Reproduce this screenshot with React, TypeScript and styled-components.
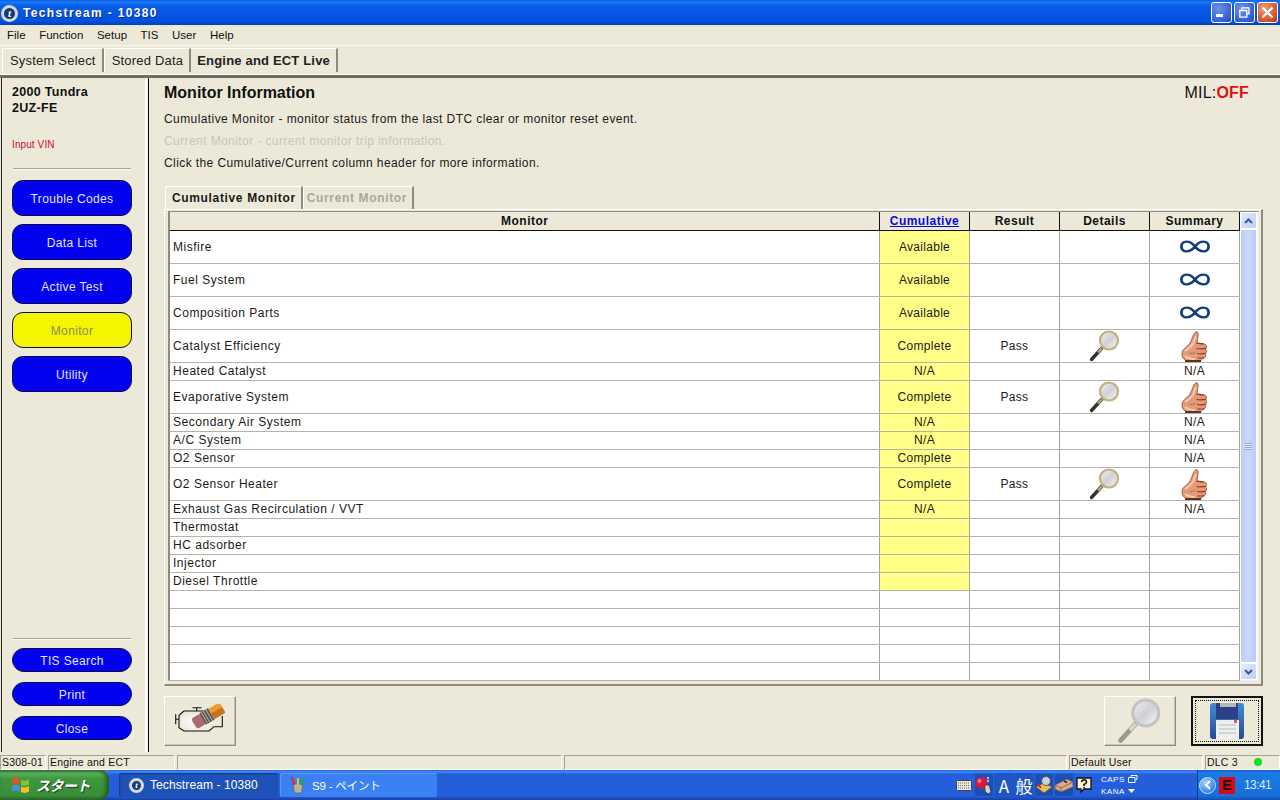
import React from "react";
import styled, { createGlobalStyle } from "styled-components";

const Global = createGlobalStyle`
  html, body { margin: 0; padding: 0; background: #ece9d8; }
  * { box-sizing: border-box; }
`;

const UI = `"Liberation Sans", Arial, "Noto Sans CJK JP", sans-serif`;

const Win = styled.div`
  width: 1280px; height: 800px; overflow: hidden; display: flex; flex-direction: column;
  background: #ece9d8; font-family: ${UI}; font-size: 12px; color: #111;
`;
const TitleBar = styled.div`
  height: 25px; flex: none; display: flex; align-items: center; padding: 1px 2px 0 1px; color: #fff;
  background: linear-gradient(180deg, #0a5ae6 0%, #1a7cf5 8%, #0a5fe8 22%, #0456e0 60%, #0350dc 85%, #0240c4 100%);
`;
const AppGlyph = styled.span<{ $size: number }>`
  width: ${p => p.$size}px; height: ${p => p.$size}px; flex: none; border-radius: 50%;
  display: inline-flex; align-items: center; justify-content: center;
  background: #123a78; border: 3px solid #d5d8dc; color: #fff;
  font: italic bold ${p => p.$size - 6}px "Liberation Serif", serif; line-height: 1;
`;
const TitleText = styled.span`
  margin-left: 5px; font-weight: 700; font-size: 12px; letter-spacing: 1.35px; text-shadow: 1px 1px #0a2a90;
`;
const WinButtons = styled.div`
  margin-left: auto; display: flex; gap: 2px; margin-top: -1px;
`;
const WinButton = styled.span<{ $close?: boolean }>`
  width: 21px; height: 21px; border: 1px solid #fff; border-radius: 3px; display: flex; align-items: center; justify-content: center;
  background: ${p => p.$close
    ? "radial-gradient(circle at 35% 30%, #e8a080, #d85a30 60%, #b8381a)"
    : "radial-gradient(circle at 35% 30%, #6f94ea, #3c66d8 60%, #2a4ac0)"};
`;
const MenuBar = styled.div`
  height: 21px; flex: none; display: flex; align-items: center; padding: 0 0 0 7px; gap: 13.5px;
  border-bottom: 1px solid #fbfaf3; letter-spacing: 0.02px; font-size: 11.5px;
`;
const TabBar = styled.div`
  height: 32px; flex: none; display: flex; align-items: flex-end; padding: 0 0 0 2px;
  border-bottom: 3px solid #6f6c60; box-shadow: inset 0 -1px 0 #fff;
`;
const TopTab = styled.div<{ $active?: boolean }>`
  height: 24px; margin-bottom: 3px; display: flex; align-items: center; padding: 0 6px 1px 7px;
  font-size: 13px; letter-spacing: 0.2px; font-weight: ${p => p.$active ? 700 : 400};
  border-left: 1px solid #fff; border-top: 1px solid #fff; border-right: 2px solid #8f8c7e; color: #222;
  ${p => p.$active && "padding: 0 6px 0 6px; border-left: 0; letter-spacing: 0.18px;"}
`;
const Body = styled.div`
  flex: 1; display: flex; min-height: 0;
`;
const SidePanel = styled.aside`
  width: 146px; flex: none; display: flex; flex-direction: column; margin-left: 1px; margin-right: 3px;
  border-left: 1px solid #222; border-right: 2px solid #fff; box-shadow: 1px 0 0 #ece9d8, 2px 0 0 #111;
  padding: 0 14px 12px 10px;
`;
const Vehicle = styled.div`
  font-weight: 700; font-size: 12.5px; line-height: 16px; margin-top: 6px; letter-spacing: 0.3px;
`;
const VinLink = styled.div`
  color: #c8102e; font-size: 10px; margin-top: 23px; letter-spacing: 0.1px; line-height: 12px;
`;
const Rule = styled.div`
  height: 1px; background: #a8a698; margin-top: 17px; box-shadow: 0 1px 0 #fafaf2; margin-left: 1px;
`;
const NavStack = styled.nav<{ $bottom?: boolean; $gap: number }>`
  display: flex; flex-direction: column; gap: ${p => p.$gap}px;
  ${p => p.$bottom ? "margin-top: 9px;" : "margin-top: 11px;"}
`;
const NavButton = styled.div<{ $tall?: boolean; $on?: boolean }>`
  width: 120px; height: ${p => p.$tall ? 36 : 24}px; border-radius: ${p => p.$tall ? 11 : 12}px;
  display: flex; align-items: center; justify-content: center; padding-top: 1px;
  background: ${p => p.$on ? "#f5f500" : "#0202ee"}; color: ${p => p.$on ? "#8c8c50" : "#e4e4ff"};
  border: 1px solid #0a0a50; font-size: 12px; letter-spacing: 0.35px;
`;
const Spring = styled.div`flex: 1;`;
const Main = styled.main`
  flex: 1; display: flex; flex-direction: column; padding: 0 17px 6px 14px; min-width: 0;
`;
const HeadRow = styled.div`
  display: flex; justify-content: space-between; align-items: center; height: 31px; padding: 0 14px 1px 0;
`;
const Heading = styled.h1`
  margin: 0; font-size: 16px; font-weight: 700; letter-spacing: 0; color: #111;
`;
const Mil = styled.div`
  font-size: 16px; letter-spacing: 0.2px; color: #111;
`;
const MilOff = styled.span`color: #e01010; font-weight: 700;`;
const Line = styled.p<{ $dim?: boolean }>`
  margin: 0; height: 22px; line-height: 20px; font-size: 12px; letter-spacing: 0.41px;
  color: ${p => p.$dim ? "#c8c6ba" : "#1a1a1a"};
`;
const InnerTabs = styled.div`
  display: flex; margin-top: 11px; height: 23px; padding-left: 1px; align-items: stretch;
`;
const InnerTab = styled.div<{ $active?: boolean }>`
  display: flex; align-items: center; padding: 0 5px 1px ${p => p.$active ? 6 : 3}px; font-weight: 700; font-size: 12px; letter-spacing: 0.65px;
  color: ${p => p.$active ? "#1a1a1a" : "#aaa89a"};
  border-top: 1px solid #fff; border-left: 1px solid #fff; border-right: 2px solid #8f8c7e;
`;
const Frame = styled.div`
  height: 477px; padding: 1px 3px 3px 3px; border-bottom: 2px solid #8f8c7e; border-right: 2px solid #8f8c7e;
  border-top: 1px solid #fff; border-left: 1px solid #fff; display: flex;
`;
const GridWrap = styled.div`
  flex: 1; display: flex; background: #fff; border-style: solid; border-color: #8f8c7e #eee #eee #8f8c7e; border-width: 1px 1px 1px 2px;
`;
const Table = styled.table`
  width: 1069px; height: 469px; flex: none; table-layout: fixed; border-collapse: collapse; font-size: 12px; letter-spacing: 0.3px;
`;
const Th = styled.th`
  height: 18px; padding: 1px 0 0 1px; background: #ece9d8; font-weight: 700; font-size: 12px; line-height: 14px; letter-spacing: 0.48px;
  border-right: 1px solid #111; border-bottom: 1px solid #111;
`;
const HeadLink = styled.span`color: #0a0ae0; text-decoration: underline;`;
const Tr = styled.tr<{ $h: number }>`height: ${p => p.$h}px;`;
const Td = styled.td<{ $c?: boolean; $y?: boolean }>`
  padding: 0 0 0 ${p => p.$c ? 1 : 3}px; text-align: ${p => p.$c ? "center" : "left"};
  letter-spacing: ${p => p.$c ? 0.3 : 0.52}px;
  border-right: 1px solid #a5a398; border-bottom: 1px solid #b5b3a8; line-height: 14px; color: #1a1a1a;
  background: ${p => p.$y ? "#ffff88" : "#fff"}; white-space: nowrap; vertical-align: middle; overflow: hidden;
`;
const IconCell = styled.span<{ $mid?: boolean }>`
  display: flex; justify-content: center; align-items: ${p => p.$mid ? "center" : "flex-end"}; height: 32px;
`;
const Scroll = styled.div`
  width: 18px; flex: none; display: flex; flex-direction: column; background: #f2f5fd; padding: 0 1px 0 0;
`;
const ScrollBtn = styled.div`
  height: 17px; flex: none; border: 1px solid #fff; border-radius: 2px; background: linear-gradient(135deg, #e4ecfd, #bccdf6);
  display: flex; align-items: center; justify-content: center;
`;
const ScrollThumb = styled.div`
  flex: 1; border: 1px solid #fff; border-radius: 2px; background: linear-gradient(90deg, #bccff8, #c8d7fa 50%, #b8ccf6);
  display: flex; align-items: center; justify-content: center;
`;
const Grip = styled.div`
  width: 7px; height: 7px; background: repeating-linear-gradient(180deg, #8fa8e0 0 1px, #dfe8fd 1px 2px);
`;
const ActionRow = styled.div`
  display: flex; align-items: center; margin-top: 10px; gap: 15px;
`;
const ActionButton = styled.div<{ $focus?: boolean }>`
  width: 72px; height: 50px; position: relative; display: flex; align-items: center; justify-content: center;
  ${p => p.$focus
    ? "border: 2px solid #111;"
    : "border: 1px solid; border-color: #fff #8f8c7e #8f8c7e #fff; box-shadow: inset -1px -1px 0 #c8c5b2;"}
  &:first-child { margin-right: auto; }
`;
const FocusRing = styled.span`
  position: absolute; inset: 2px; border: 1px dotted #111; pointer-events: none;
`;
const StatusBar = styled.footer`
  height: 18px; flex: none; display: flex; gap: 2px; font-size: 10.5px; letter-spacing: 0.2px; padding-top: 3px;
`;
const StatusCell = styled.div<{ $w?: number }>`
  ${p => p.$w ? `width: ${p.$w}px; flex: none;` : "flex: 1;"}
  height: 15px; display: flex; align-items: center; padding: 0 0 1px 1px; justify-content: space-between;
  border-top: 1px solid #a5a398; border-left: 1px solid #a5a398; border-bottom: 1px solid #fff; border-right: 1px solid #fff;
  white-space: nowrap; overflow: hidden;
`;
const Led = styled.span`
  width: 8px; height: 8px; border-radius: 50%; background: #10e020; margin-right: 17px;
`;
const Taskbar = styled.div`
  height: 30px; flex: none; display: flex; align-items: center; color: #fff;
  background: linear-gradient(180deg, #1e5ed6 0%, #3f8cf3 6%, #245edb 14%, #245edb 86%, #1941a5 100%);
`;
const Start = styled.div`
  width: 109px; height: 30px; flex: none; display: flex; align-items: center; padding-left: 11px; gap: 6px;
  border-radius: 0 9px 9px 0; background: linear-gradient(180deg, #2f7c30 0%, #5fb05f 10%, #3d963d 30%, #3a8f3a 85%, #2f6e2f 100%);
  font: italic 700 14px "Noto Sans CJK JP", sans-serif; letter-spacing: -0.5px; text-shadow: 1px 1px 1px #1a3a1a;
  box-shadow: inset -3px 0 4px #1d5a1d;
`;
const TaskButton = styled.div<{ $pressed?: boolean; $w: number; $narrow?: boolean }>`
  width: ${p => p.$w}px; height: 24px; margin-left: ${p => p.$pressed ? 10 : 2}px; flex: none; display: flex; align-items: center; gap: 6px; padding-left: 10px;
  border-radius: 2px; font-size: ${p => p.$narrow ? 11.5 : 12}px; letter-spacing: ${p => p.$narrow ? -0.2 : 0.1}px; font-family: "Liberation Sans", "Noto Sans CJK JP", sans-serif;
  background: ${p => p.$pressed ? "#1e52b7" : "#3c81f3"};
  box-shadow: ${p => p.$pressed ? "inset 1px 1px 2px #103a88" : "inset 1px 1px 0 #5a98f8"};
`;
const TraySpace = styled.div`
  margin-left: auto; display: flex; align-items: center; margin-right: 6px;
`;
const TrayIcon = styled.span<{ $box?: boolean }>`
  width: 20px; height: 24px; display: flex; align-items: center; justify-content: center; border-radius: 3px;
  ${p => p.$box && "background: #1a4fb8; box-shadow: inset 0 0 0 1px #2a62cc;"}
`;
const ImeGlyph = styled.span`
  width: 20px; height: 24px; display: flex; align-items: center; justify-content: center; border-radius: 3px; background: #1f56c4;
  font: 17px "Noto Sans CJK JP", sans-serif; color: #fff;
`;
const ImeState = styled.div`
  display: grid; grid-template-columns: 20px auto; column-gap: 7px; row-gap: 3px; font-size: 8px; letter-spacing: 0.5px; margin: 0 53px 0 7px; line-height: 9px; align-items: center;
`;
const Tray = styled.div`
  width: 83px; height: 30px; flex: none; display: flex; align-items: center; gap: 3px; padding-left: 1px;
  background: linear-gradient(180deg, #1360c8, #1b7ae6 10%, #1770da 85%, #1050b0);
  border-left: 1px solid #0a3a90; font-size: 12px;
`;
const Chevron = styled.span`
  width: 17px; height: 17px; border-radius: 50%; display: flex; align-items: center; justify-content: center;
  background: radial-gradient(circle at 35% 30%, #a8d0ff, #3b80ee 70%); border: 1px solid #cfe2ff;
`;
const RedE = styled.span`
  width: 16px; height: 17px; background: #d80a12; color: #111; font: 700 14px "Liberation Sans", sans-serif;
  display: flex; align-items: center; justify-content: center;
`;
const Clock = styled.span`margin-left: 6px; letter-spacing: -0.6px; color: #dfeaff;`;

const InfinityIcon = () => (
  <svg width="30" height="13" viewBox="0 0 32 16" preserveAspectRatio="none" aria-hidden>
    <path d="M16 8C12.500 3 9.500 2 7 2 3.500 2 1.500 4.800 1.500 8s2 6 5.500 6c2.500 0 5.500-1 9-6 3.500-5 6.500-6 9-6 3.500 0 5.500 2.800 5.500 6s-2 6-5.500 6c-2.500 0-5.500-1-9-6Z" fill="none" stroke="#123f78" strokeWidth="3" />
  </svg>
);
const Thumb = () => (
  <svg width="27" height="31" viewBox="0 0 27 31" aria-hidden>
    <path d="M15 .8c1.600-.4 2.500 1 2.200 2.800l-1.200 8 3 1.200h3.500c1.800 0 3 1.200 3 2.800 0 1-.4 1.800-1 2.300.6.600 1 1.400 1 2.400 0 1-.5 1.900-1.200 2.400.4.600.6 1.300.4 2.200-.3 1.300-1.400 2.300-2.700 2.300L19.500 30H5L1.500 26.500c-.6-2.500-.6-5 .2-7C3.500 17.500 6 15.500 8 13.500c2-2.500 2.500-5 3.800-8C12.600 3.500 13.500 1.300 15 .8Z" fill="#e49a78" stroke="#8a4a30" strokeWidth=".8" />
    <path d="M15.500 12.500c2.500-.6 5 .2 7 .3M15.500 17.500c3.500.6 6.500.3 9.500-.1M16 22.500c3 .5 6 .4 8.600-.1M16.500 26.800c2.500.3 4.500.2 6.500 0" stroke="#8c3c28" strokeWidth="1.200" fill="none" />
    <path d="M4 20c2.500-2 6-4 8-7 1-2 1.500-5 3-8M4 25c2 1.500 5 3 10 3" stroke="#f6cdb4" strokeWidth="1.800" fill="none" />
    <path d="M8.500 22c2 1 4 .5 6-1" stroke="#b86a4c" strokeWidth="1" fill="none" />
    <rect x="4" y="29" width="16" height="2" fill="#5a3420" />
  </svg>
);
const Magnifier = ({ size = 32, pale = false }: { size?: number; pale?: boolean }) => (
  <svg width={size} height={size} viewBox="0 0 32 32" aria-hidden>
    <defs>
      <linearGradient id={pale ? "gp" : "gl"} x1="0" y1="0" x2="1" y2="1">
        <stop offset="0" stopColor="#f4f4f4" /><stop offset="0.5" stopColor="#cfcfd6" /><stop offset="1" stopColor="#fbfbfb" />
      </linearGradient>
    </defs>
    <path d="M13 18 2.500 29.500" stroke={pale ? "#9a9a90" : "#333330"} strokeWidth="3.400" strokeLinecap="round" />
    <path d="M13 18 9 22.500" stroke={pale ? "#d8d6ca" : "#b8a878"} strokeWidth="2.600" />
    <circle cx="20" cy="10.500" r="9" fill={`url(#${pale ? "gp" : "gl"})`} stroke={pale ? "#c4c4c6" : "#c4b078"} strokeWidth="2.200" />
  </svg>
);
const Floppy = () => (
  <svg width="38" height="38" viewBox="0 0 38 38" aria-hidden>
    <defs>
      <linearGradient id="fb" x1="0" y1="0" x2="0" y2="1"><stop offset="0" stopColor="#3f8ed0" /><stop offset="1" stopColor="#2a4a90" /></linearGradient>
    </defs>
    <path d="M2 4 Q2 1 5 1 H33 Q36 1 36 4 V34 Q36 37 33 37 H5 Q2 37 2 34 Z" fill="url(#fb)" />
    <rect x="8" y="1" width="22" height="16" fill="#2d3f86" />
    <rect x="12" y="1" width="16" height="4" fill="#b5b8bc" />
    <rect x="8" y="18" width="23" height="19" fill="#eef0ee" />
    <path d="M11 23h17M11 27h17M11 31h17" stroke="#b8bcc4" strokeWidth="1" />
    <rect x="26" y="18" width="3" height="3" fill="#d05a7a" />
  </svg>
);
const EngineEraser = () => (
  <svg width="50" height="34" viewBox="0 0 50 34" aria-hidden>
    <defs>
      <radialGradient id="smudge"><stop offset="0" stopColor="#ffffff" /><stop offset="0.7" stopColor="#f4f2ea" /><stop offset="1" stopColor="#ece9d8" /></radialGradient>
    </defs>
    <ellipse cx="22" cy="18" rx="19" ry="10" fill="url(#smudge)" />
    <path d="M17.500 3.700h9M21.700 3.700V7M9 7h20M9 7 4 11.300V23.700L9 27h25l5-4.300h8.300V12M4 15.300H.7M.7 10.300v10" fill="none" stroke="#111" strokeWidth="1.100" />
    <g transform="translate(19 20) rotate(-30)">
      <rect x="0" y="-6" width="11" height="12" rx="3" fill="#b06a6c" />
      <rect x="10" y="-6.500" width="10" height="13" fill="#5a5a56" />
      <path d="M12 -6.500v13M14.500 -6.500v13M17.500 -6.500v13" stroke="#c8c8c0" strokeWidth=".8" />
      <path d="M20 -6H33V-1H20Z" fill="#f09a30" />
      <path d="M20 -1H33V6H20Z" fill="#c8741e" />
    </g>
  </svg>
);
const XPFlag = () => (
  <svg width="19" height="18" viewBox="0 0 19 18" aria-hidden>
    <path d="M1 3Q5 0 8.500 3V8.500Q5 6 1 8.500Z" fill="#e2522c" />
    <path d="M10 3.500Q14 6 18 3V8.500Q14 11 10 9Z" fill="#7cc23a" />
    <path d="M1 10Q5 7.500 8.500 10V15.500Q5 13 1 15.500Z" fill="#4a8fe8" />
    <path d="M10 10.500Q14 12.500 18 10V15.500Q14 18 10 16Z" fill="#f4c322" />
  </svg>
);
const PaintIcon = () => (
  <svg width="16" height="18" viewBox="0 0 16 18" aria-hidden>
    <path d="M3 8h10l-1.500 9h-7Z" fill="#b8b49a" stroke="#555" strokeWidth=".6" />
    <path d="M4 9 2 1" stroke="#d82a2a" strokeWidth="2" /><path d="M8 9V2" stroke="#f0c020" strokeWidth="2" /><path d="M11 9l3-7" stroke="#28a040" strokeWidth="2" />
  </svg>
);
const Caret = ({ up }: { up?: boolean }) => (
  <svg width="9" height="6" viewBox="0 0 9 6" aria-hidden>
    <path d={up ? "M1 5 4.500 1.500 8 5" : "M1 1 4.500 4.500 8 1"} fill="none" stroke="#3a5a9a" strokeWidth="2" />
  </svg>
);
const TrayKeyboard = () => (
  <svg width="16" height="11" viewBox="0 0 16 11" aria-hidden>
    <rect x=".5" y=".5" width="15" height="10" rx="1" fill="#e8e8e0" stroke="#444" />
    <path d="M2 3h12M2 5.500h12M2 8h12" stroke="#666" strokeDasharray="1 1" />
  </svg>
);
const TrayBall = () => (
  <svg width="20" height="20" viewBox="0 0 20 20" aria-hidden>
    <circle cx="7.500" cy="8" r="6" fill="#d81a3a" />
    <circle cx="5.500" cy="6" r="2" fill="#f08090" />
    <path d="M11 10h4l2 7-3 2-3-3Z" fill="#d0d0d4" stroke="#333" strokeWidth=".7" />
    <path d="M14 2v6" stroke="#f0f0f0" strokeWidth="1.500" strokeDasharray="2 1" />
  </svg>
);
const TrayPalette = () => (
  <svg width="20" height="20" viewBox="0 0 20 20" aria-hidden>
    <path d="M2 12 10 8l8 4-8 6Z" fill="#e8c050" stroke="#6a4a10" strokeWidth=".6" />
    <circle cx="12" cy="6" r="4.500" fill="#c8d0d8" stroke="#555" /><path d="M4 9l3 4" stroke="#c83030" strokeWidth="2" />
  </svg>
);
const TrayEraser = () => (
  <svg width="20" height="18" viewBox="0 0 20 18" aria-hidden>
    <path d="M1 9 13 3l6 3v5L7 16l-6-3Z" fill="#e0a888" stroke="#6a4a3a" strokeWidth=".7" />
    <path d="M1 9l6 3 12-6M7 12v4" stroke="#6a4a3a" strokeWidth=".7" fill="none" />
    <path d="M10 5l3 1.500" stroke="#222" strokeWidth="1.500" />
  </svg>
);
const TrayHelp = () => (
  <svg width="18" height="18" viewBox="0 0 18 18" aria-hidden>
    <path d="M2 2h14v11H9l-3 3v-3H2Z" fill="#fff8d8" stroke="#111" strokeWidth="1.300" />
    <path d="M6.500 6Q7 3.800 9 3.800 11.500 3.800 11.500 6 11.500 7.500 9 8.500V10M9 11v1.200" fill="none" stroke="#111" strokeWidth="1.600" />
  </svg>
);
const RestoreGlyph = () => (
  <svg width="11" height="11" viewBox="0 0 11 11" aria-hidden>
    <path d="M3 2.500V.8h7v6H8.200M.8 3.500h7v6.700h-7Z" fill="none" stroke="#fff" strokeWidth="1.300" />
  </svg>
);
const CloseGlyph = () => (
  <svg width="13" height="13" viewBox="0 0 13 13" aria-hidden>
    <path d="M1.500 1.500 11.500 11.500M11.500 1.500 1.500 11.500" stroke="#fff" strokeWidth="2.200" />
  </svg>
);
const MinGlyph = () => (
  <svg width="11" height="11" viewBox="0 0 11 11" aria-hidden><rect x="0" y="7" width="7" height="3" fill="#fff" /></svg>
);
const RestoreSmall = () => (
  <svg width="10" height="8" viewBox="0 0 10 8" aria-hidden>
    <path d="M3 2V.5h6v4H7.500M.5 2.500h6.500v5H.5Z" fill="none" stroke="#fff" />
  </svg>
);
const SmallDown = () => (
  <svg width="7" height="4" viewBox="0 0 7 4" aria-hidden><path d="M0 0h7L3.500 4Z" fill="#fff" /></svg>
);
const ChevronLeft = () => (
  <svg width="8" height="10" viewBox="0 0 8 10" aria-hidden><path d="M6 1 2 5l4 4" fill="none" stroke="#fff" strokeWidth="2" /></svg>
);

type Row = { n: string; h: number; c?: string; r?: string; icon?: "inf" | "pass"; s?: string; y?: boolean };
const rows: Row[] = [
  { n: "Misfire", h: 33, c: "Available", icon: "inf", y: true },
  { n: "Fuel System", h: 33, c: "Available", icon: "inf", y: true },
  { n: "Composition Parts", h: 33, c: "Available", icon: "inf", y: true },
  { n: "Catalyst Efficiency", h: 33, c: "Complete", r: "Pass", icon: "pass", y: true },
  { n: "Heated Catalyst", h: 18, c: "N/A", s: "N/A", y: true },
  { n: "Evaporative System", h: 33, c: "Complete", r: "Pass", icon: "pass", y: true },
  { n: "Secondary Air System", h: 18, c: "N/A", s: "N/A", y: true },
  { n: "A/C System", h: 18, c: "N/A", s: "N/A", y: true },
  { n: "O2 Sensor", h: 18, c: "Complete", s: "N/A", y: true },
  { n: "O2 Sensor Heater", h: 33, c: "Complete", r: "Pass", icon: "pass", y: true },
  { n: "Exhaust Gas Recirculation / VVT", h: 18, c: "N/A", s: "N/A", y: true },
  { n: "Thermostat", h: 18, y: true },
  { n: "HC adsorber", h: 18, y: true },
  { n: "Injector", h: 18, y: true },
  { n: "Diesel Throttle", h: 18, y: true },
  { n: "", h: 18 }, { n: "", h: 18 }, { n: "", h: 18 }, { n: "", h: 18 }, { n: "", h: 18 },
];

export default function App() {
  return (
    <Win>
      <Global />
      <TitleBar>
        <AppGlyph $size={17}>t</AppGlyph>
        <TitleText>Techstream - 10380</TitleText>
        <WinButtons>
          <WinButton><MinGlyph /></WinButton>
          <WinButton><RestoreGlyph /></WinButton>
          <WinButton $close><CloseGlyph /></WinButton>
        </WinButtons>
      </TitleBar>
      <MenuBar>
        <span>File</span><span>Function</span><span>Setup</span><span>TIS</span><span>User</span><span>Help</span>
      </MenuBar>
      <TabBar>
        <TopTab>System Select</TopTab>
        <TopTab>Stored Data</TopTab>
        <TopTab $active>Engine and ECT Live</TopTab>
      </TabBar>
      <Body>
        <SidePanel>
          <Vehicle>2000 Tundra<br />2UZ-FE</Vehicle>
          <VinLink>Input VIN</VinLink>
          <Rule />
          <NavStack $gap={8}>
            <NavButton $tall>Trouble Codes</NavButton>
            <NavButton $tall>Data List</NavButton>
            <NavButton $tall>Active Test</NavButton>
            <NavButton $tall $on>Monitor</NavButton>
            <NavButton $tall>Utility</NavButton>
          </NavStack>
          <Spring />
          <Rule />
          <NavStack $bottom $gap={10}>
            <NavButton>TIS Search</NavButton>
            <NavButton>Print</NavButton>
            <NavButton>Close</NavButton>
          </NavStack>
        </SidePanel>
        <Main>
          <HeadRow>
            <Heading>Monitor Information</Heading>
            <Mil>MIL:<MilOff>OFF</MilOff></Mil>
          </HeadRow>
          <Line>Cumulative Monitor - monitor status from the last DTC clear or monitor reset event.</Line>
          <Line $dim>Current Monitor - current monitor trip information.</Line>
          <Line>Click the Cumulative/Current column header for more information.</Line>
          <InnerTabs>
            <InnerTab $active>Cumulative Monitor</InnerTab>
            <InnerTab>Current Monitor</InnerTab>
          </InnerTabs>
          <Frame>
            <GridWrap>
              <Table>
                <colgroup>
                  <col style={{ width: 709 }} /><col style={{ width: 90 }} /><col style={{ width: 90 }} /><col style={{ width: 90 }} /><col style={{ width: 90 }} />
                </colgroup>
                <thead>
                  <tr>
                    <Th>Monitor</Th><Th><HeadLink>Cumulative</HeadLink></Th><Th>Result</Th><Th>Details</Th><Th>Summary</Th>
                  </tr>
                </thead>
                <tbody>
                  {rows.map((r, i) => (
                    <Tr key={i} $h={r.h}>
                      <Td>{r.n}</Td>
                      <Td $c $y={r.y}>{r.c}</Td>
                      <Td $c>{r.r}</Td>
                      <Td $c>{r.icon === "pass" && <IconCell><Magnifier /></IconCell>}</Td>
                      <Td $c>
                        {r.icon === "inf" && <IconCell $mid><InfinityIcon /></IconCell>}
                        {r.icon === "pass" && <IconCell><Thumb /></IconCell>}
                        {r.s}
                      </Td>
                    </Tr>
                  ))}
                </tbody>
              </Table>
              <Scroll>
                <ScrollBtn><Caret up /></ScrollBtn>
                <ScrollThumb><Grip /></ScrollThumb>
                <ScrollBtn><Caret /></ScrollBtn>
              </Scroll>
            </GridWrap>
          </Frame>
          <ActionRow>
            <ActionButton><EngineEraser /></ActionButton>
            <ActionButton><Magnifier size={46} pale /></ActionButton>
            <ActionButton $focus><FocusRing /><Floppy /></ActionButton>
          </ActionRow>
        </Main>
      </Body>
      <StatusBar>
        <StatusCell $w={46}>S308-01</StatusCell>
        <StatusCell $w={127}>Engine and ECT</StatusCell>
        <StatusCell $w={385} />
        <StatusCell />
        <StatusCell $w={134}>Default User</StatusCell>
        <StatusCell $w={75}>DLC 3<Led /></StatusCell>
      </StatusBar>
      <Taskbar>
        <Start><XPFlag />スタート</Start>
        <TaskButton $pressed $w={159}><AppGlyph $size={15}>t</AppGlyph>Techstream - 10380</TaskButton>
        <TaskButton $w={157} $narrow><PaintIcon />S9 - ペイント</TaskButton>
        <TraySpace>
          <TrayIcon><TrayKeyboard /></TrayIcon>
          <TrayIcon $box><TrayBall /></TrayIcon>
          <ImeGlyph>A</ImeGlyph>
          <ImeGlyph>般</ImeGlyph>
          <TrayIcon $box><TrayPalette /></TrayIcon>
          <TrayIcon $box><TrayEraser /></TrayIcon>
          <TrayIcon><TrayHelp /></TrayIcon>
          <ImeState>
            <span>CAPS</span><RestoreSmall />
            <span>KANA</span><SmallDown />
          </ImeState>
        </TraySpace>
        <Tray>
          <Chevron><ChevronLeft /></Chevron>
          <RedE>E</RedE>
          <Clock>13:41</Clock>
        </Tray>
      </Taskbar>
    </Win>
  );
}
